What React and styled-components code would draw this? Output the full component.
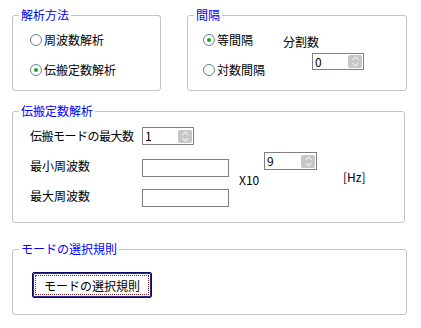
import React from "react";
import styled, { createGlobalStyle } from "styled-components";

const GlobalStyle = createGlobalStyle`
  html, body {
    margin: 0;
    background: #fff;
  }
  body {
    font-family: "Noto Sans CJK JP", "Liberation Sans", sans-serif;
    font-size: 12px;
    color: #000;
  }
`;

const Page = styled.div`
  padding: 8px 0 0 12px;
  display: flex;
  flex-direction: column;
  align-items: flex-start;
`;

const TopRow = styled.div`
  display: flex;
  gap: 26px;
`;

const Group = styled.fieldset`
  margin: ${(p) => p.$mt || 0}px 0 0 0;
  padding: 0;
  min-width: 0;
  width: ${(p) => p.$w}px;
  box-sizing: border-box;
  border: 1px solid #c3c3c3;
  border-radius: 3px;
`;

const Legend = styled.legend`
  margin-left: 6px;
  padding: 0 2px;
  line-height: 14px;
  font-size: 12px;
  color: #0000ff;
`;

const RadioBody = styled.div`
  padding: 8px 0 10px ${(p) => p.$pl}px;
  display: flex;
  flex-direction: column;
  gap: 10px;
`;

const RadioRow = styled.label`
  display: flex;
  align-items: center;
  gap: 2px;
  height: 20px;
  line-height: 14px;
`;

const RadioDot = styled.span`
  width: 12px;
  height: 12px;
  box-sizing: border-box;
  border-radius: 50%;
  border: 1px solid #5a8691;
  background: #fff;
  display: flex;
  align-items: center;
  justify-content: center;

  &::after {
    content: "";
    width: 4px;
    height: 4px;
    border-radius: 50%;
    background: ${(p) => (p.$checked ? "#1ea51e" : "transparent")};
  }
`;

const IntervalBody = styled.div`
  display: grid;
  grid-template-columns: 95px auto;
`;

const DivisionCol = styled.div`
  display: flex;
  flex-direction: column;
  padding-top: 13px;
  gap: 4px;
`;

const Label = styled.span`
  line-height: 14px;
  white-space: nowrap;
`;

const SpinBox = styled.div`
  display: flex;
  align-items: center;
  justify-content: space-between;
  width: ${(p) => p.$w || 52}px;
  height: ${(p) => p.$h || 18}px;
  box-sizing: border-box;
  border: 1px solid #808080;
  background: #fff;
  padding: 0 1px 0 2px;
  line-height: 14px;
  color: #000;
  margin-left: ${(p) => p.$ml || 0}px;
`;

const SpinButton = styled.span`
  width: 14px;
  height: 13px;
  background: #c6c6c6;
  border-radius: 2px;
  display: flex;
  align-items: center;
  justify-content: center;
`;

const TextBox = styled.div`
  width: 87px;
  height: 18px;
  box-sizing: border-box;
  border: 1px solid #808080;
  background: #fff;
  margin-top: 4px;
`;

const ParamGrid = styled.div`
  display: grid;
  grid-template-columns: 112px 87px 10px 25px 79px auto;
  grid-template-rows: 30px 30px 30px;
  align-items: center;
  padding: 3px 0 11px 17px;
`;

const Cell = styled.div`
  grid-column: ${(p) => p.$col};
  grid-row: ${(p) => p.$row};
  align-self: ${(p) => p.$align || "center"};
  margin-top: ${(p) => p.$mt || 0}px;
  line-height: 14px;
  white-space: nowrap;
  color: #000;
  letter-spacing: ${(p) => p.$ls || 0}px;
`;

const ButtonBody = styled.div`
  padding: 16px 0 16px 19px;
`;

const RuleButton = styled.button`
  position: relative;
  width: 120px;
  height: 26px;
  box-sizing: border-box;
  padding: 0;
  border: 1px solid #0c0c66;
  border-radius: 2px;
  box-shadow: inset 0 0 0 1px #2b2b8a;
  background: #fff;
  font: inherit;
  font-size: 12px;
  color: #000;

  &::after {
    content: "";
    position: absolute;
    inset: 2px;
    border: 1px dotted #8a1c1c;
  }
`;

const Arrows = () => (
  <svg width="9" height="11" viewBox="0 0 9 11">
    <path d="M1.5 4 L4.5 1 L7.5 4" fill="none" stroke="#e9e9e9" strokeWidth="1.4" />
    <path d="M1.5 7 L4.5 10 L7.5 7" fill="none" stroke="#e9e9e9" strokeWidth="1.4" />
  </svg>
);

const Spinner = ({ value, ...rest }) => (
  <SpinBox {...rest}>
    <span>{value}</span>
    <SpinButton>
      <Arrows />
    </SpinButton>
  </SpinBox>
);

const Radio = ({ checked, children }) => (
  <RadioRow>
    <RadioDot $checked={checked} />
    {children}
  </RadioRow>
);

export default function App() {
  return (
    <>
      <GlobalStyle />
      <Page>
        <TopRow>
          <Group $w={149}>
            <Legend>解析方法</Legend>
            <RadioBody $pl={17}>
              <Radio>周波数解析</Radio>
              <Radio checked>伝搬定数解析</Radio>
            </RadioBody>
          </Group>
          <Group $w={220}>
            <Legend>間隔</Legend>
            <IntervalBody>
              <RadioBody $pl={15}>
                <Radio checked>等間隔</Radio>
                <Radio>対数間隔</Radio>
              </RadioBody>
              <DivisionCol>
                <Label>分割数</Label>
                <Spinner value="0" $ml={29} $h={17} />
              </DivisionCol>
            </IntervalBody>
          </Group>
        </TopRow>

        <Group $w={393} $mt={13}>
          <Legend>伝搬定数解析</Legend>
          <ParamGrid>
            <Cell $col={1} $row={1} $ls={-0.5}>伝搬モードの最大数</Cell>
            <Cell $col={2} $row={1}>
              <Spinner value="1" />
            </Cell>
            <Cell $col={1} $row={2}>最小周波数</Cell>
            <Cell $col={2} $row={2}>
              <TextBox />
            </Cell>
            <Cell $col={1} $row={3}>最大周波数</Cell>
            <Cell $col={2} $row={3}>
              <TextBox />
            </Cell>
            <Cell $col={4} $row="2 / span 2" $mt={-2}>X10</Cell>
            <Cell $col={5} $row={2} $align="start" $mt={1}>
              <Spinner value="9" $w={53} />
            </Cell>
            <Cell $col={6} $row="2 / span 2" $mt={-8}>[Hz]</Cell>
          </ParamGrid>
        </Group>

        <Group $w={395} $mt={19}>
          <Legend>モードの選択規則</Legend>
          <ButtonBody>
            <RuleButton>モードの選択規則</RuleButton>
          </ButtonBody>
        </Group>
      </Page>
    </>
  );
}
